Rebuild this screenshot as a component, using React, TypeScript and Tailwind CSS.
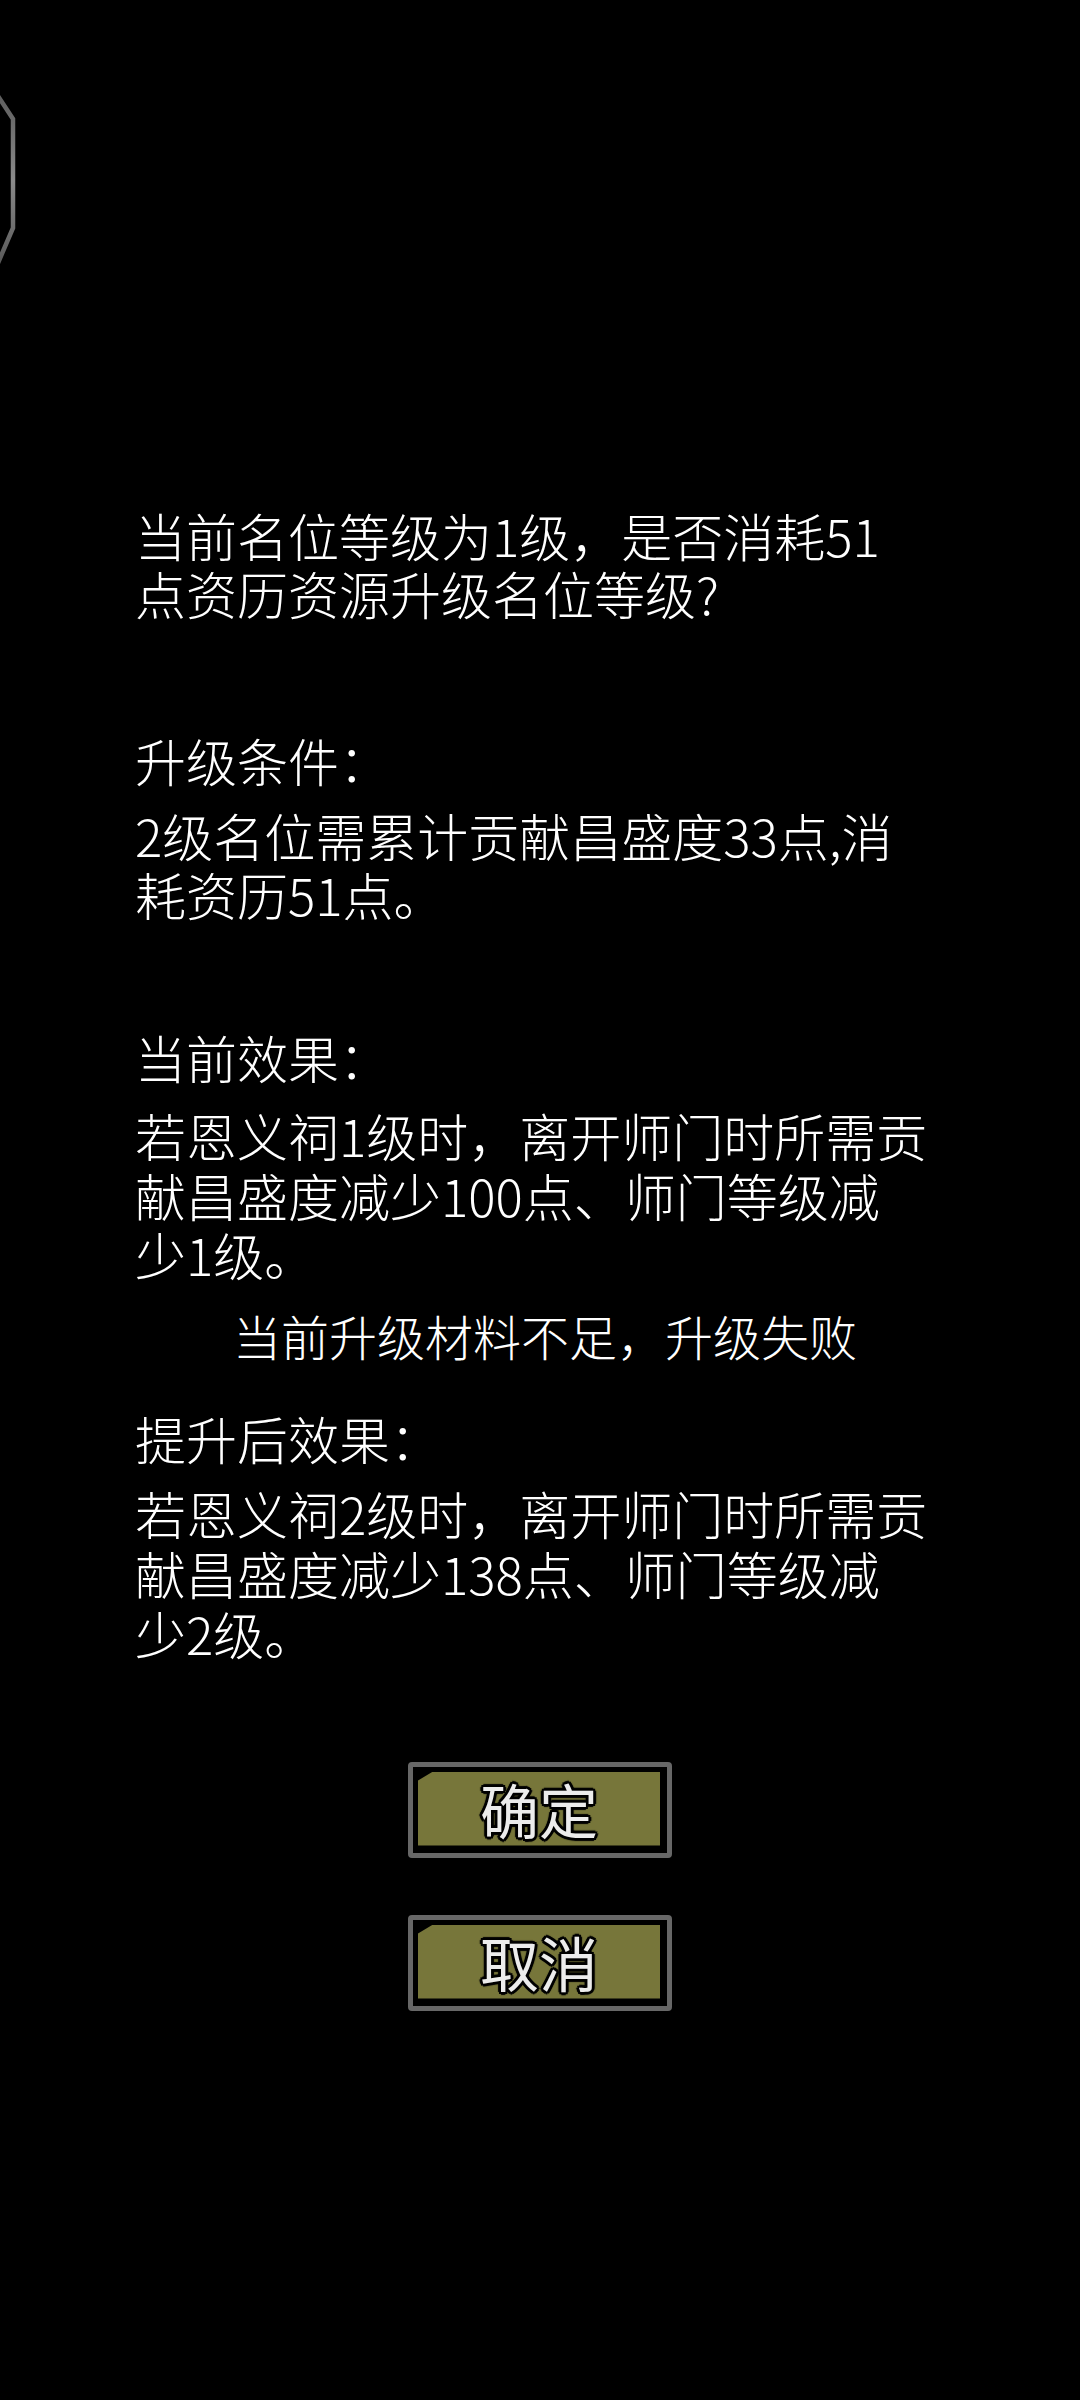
import React from "react";

const outline =
  "[text-shadow:2px_2px_0_#000,-2px_-2px_0_#000,2px_-2px_0_#000,-2px_2px_0_#000,0_2px_0_#000,2px_0_0_#000,0_-2px_0_#000,-2px_0_0_#000,3px_0_1px_#000,-3px_0_1px_#000,0_3px_1px_#000,0_-3px_1px_#000]";

function GameButton({ label }: { label: string }) {
  return (
    <div className="w-[264px] h-[96px] box-border border-[5px] border-[#676767] rounded-[4px] bg-black pt-[5px] pl-[5px] pr-[7px] pb-[7px]">
      <div className="w-full h-full bg-[#77763a] [clip-path:polygon(15px_0,100%_0,100%_100%,0_100%,0_9px)] flex items-center justify-center">
        <span
          className={`text-[59px] leading-none text-[#ececec] font-normal ${outline}`}
          style={{ fontFamily: '"Noto Sans CJK SC", "Noto Sans", sans-serif' }}
        >
          {label}
        </span>
      </div>
    </div>
  );
}

export default function App() {
  return (
    <div
      className="relative w-[1080px] min-h-[2400px] bg-black text-white font-light overflow-hidden"
      style={{ fontFamily: '"Noto Sans CJK SC", "Noto Sans", sans-serif' }}
    >
      <svg className="absolute left-0 top-0" width="24" height="280" viewBox="0 0 24 280">
        <defs>
          <linearGradient id="edge" x1="0" y1="0" x2="0" y2="1">
            <stop offset="0" stopColor="#5e5e5e" />
            <stop offset="0.5" stopColor="#8a8a8a" />
            <stop offset="1" stopColor="#5a5a5a" />
          </linearGradient>
        </defs>
        <path d="M-2 96 L13 119 L13 228 L-2 263" fill="none" stroke="url(#edge)" strokeWidth="4.5" />
      </svg>

      <div className="flex flex-col pl-[135px] pt-[506px] text-[51px] whitespace-nowrap">
        <p className="leading-[58px]">
          当前名位等级为1级，是否消耗51
          <br />
          点资历资源升级名位等级?
        </p>

        <p className="leading-[59px] mt-[109px]">升级条件：</p>
        <p className="leading-[59px] mt-[16px]">
          2级名位需累计贡献昌盛度33点,消
          <br />
          耗资历51点。
        </p>

        <p className="leading-[59px] mt-[104px]">当前效果：</p>
        <p className="leading-[59.5px] mt-[19px]">
          若恩义祠1级时，离开师门时所需贡
          <br />
          献昌盛度减少100点、师门等级减
          <br />
          少1级。
        </p>
      </div>

      <p className="w-full text-center text-[48px] leading-[56px] mt-[22px] pl-[10px] whitespace-nowrap">
        当前升级材料不足，升级失败
      </p>

      <div className="flex flex-col pl-[135px] text-[51px] whitespace-nowrap">
        <p className="leading-[59px] mt-[46px]">提升后效果：</p>
        <p className="leading-[60px] mt-[15px]">
          若恩义祠2级时，离开师门时所需贡
          <br />
          献昌盛度减少138点、师门等级减
          <br />
          少2级。
        </p>
      </div>

      <div className="flex flex-col items-center mt-[99px] gap-[57px]">
        <GameButton label="确定" />
        <GameButton label="取消" />
      </div>
    </div>
  );
}
